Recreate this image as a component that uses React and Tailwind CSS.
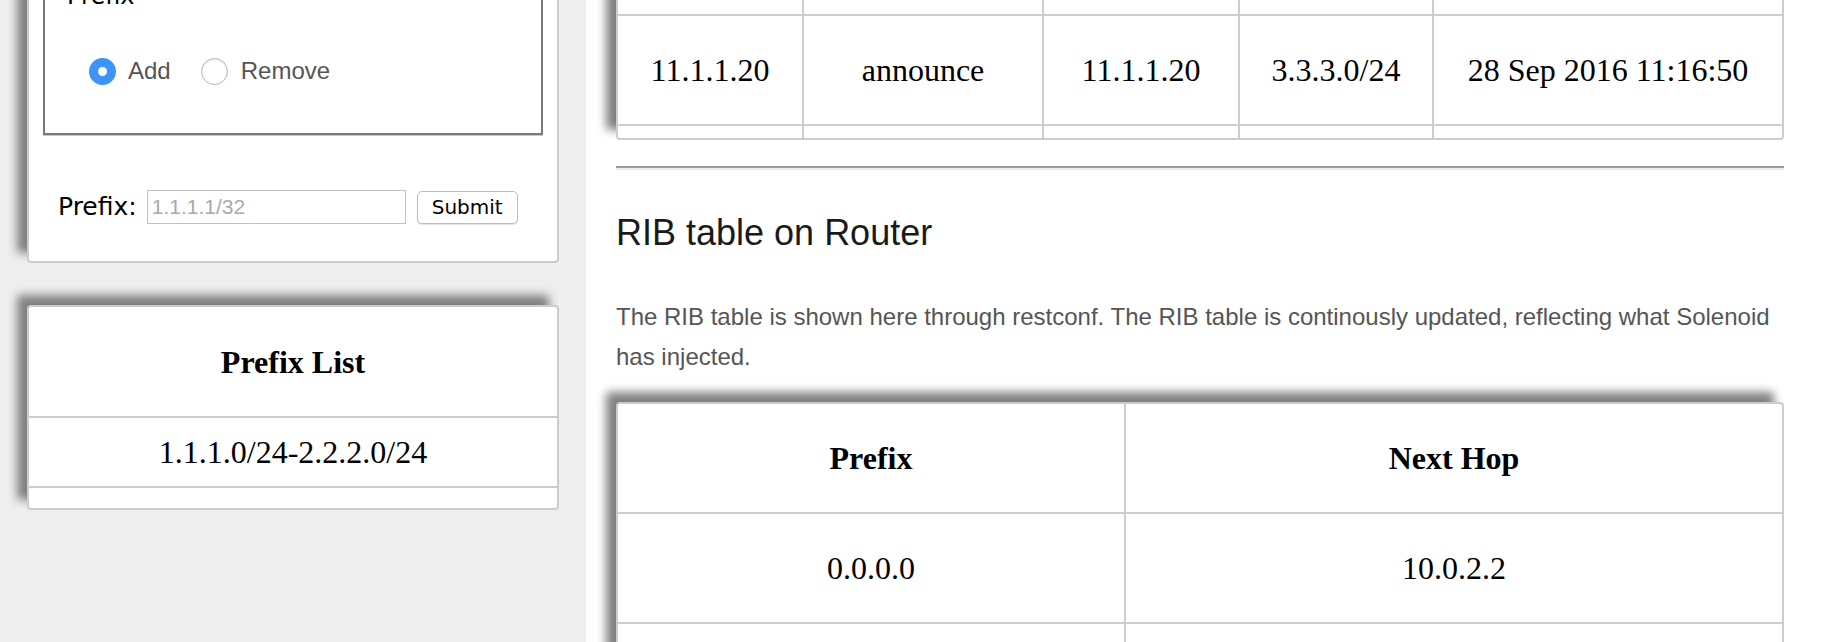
import React from "react";

const serif = { fontFamily: '"Liberation Serif", "Times New Roman", serif' };

const Radio = ({ checked }) =>
  checked ? (
    <span className="flex h-[27px] w-[27px] shrink-0 items-center justify-center rounded-full bg-[#3d94f6]">
      <span className="block h-[9px] w-[9px] rounded-full bg-white" />
    </span>
  ) : (
    <span className="block h-[27px] w-[27px] shrink-0 rounded-full border border-[#b5b5b5] bg-white shadow-[inset_0_1px_2px_rgba(0,0,0,0.12)]" />
  );

const routes = [
  { peer: "11.1.1.20", type: "announce", nextHop: "11.1.1.20", prefix: "3.3.3.0/24", time: "28 Sep 2016 11:16:50" },
];

const rib = [{ prefix: "0.0.0.0", nextHop: "10.0.2.2" }];

export default function App() {
  return (
    <div className="flex h-[642px] w-[1826px] overflow-hidden bg-white">
      {/* Sidebar */}
      <div className="w-[586px] shrink-0 bg-[#eeeeee] px-[27px]">
        {/* Announce / withdraw form */}
        <div className="-mt-[60px] rounded-[4px] border-2 border-[#cccccc] bg-white px-[14px] pt-[18px] pb-[37px] shadow-[-10px_-10px_10px_#808080]">
          <div className="border-2 border-[#7a7a7a] pb-[48px] shadow-[0_1px_0_#c8c8c8]">
            <div className="mt-[20px] pl-[22px] text-[24px] leading-[28px] text-black" style={{ fontFamily: '"DejaVu Sans", sans-serif' }}>
              Prefix
            </div>
            <div className="mt-[47px] ml-[44px] flex h-[28px] items-center text-[24px] text-[#555555]" style={{ fontFamily: '"Liberation Sans", Arial, sans-serif' }}>
              <Radio checked />
              <span className="ml-[12px]">Add</span>
              <span className="ml-[30px] flex"><Radio /></span>
              <span className="ml-[13px]">Remove</span>
            </div>
          </div>
          <div className="mt-[55px] ml-[15px] flex h-[34px] items-center" style={{ fontFamily: '"DejaVu Sans", sans-serif' }}>
            <span className="text-[25px] text-black">Prefix:</span>
            <div className="ml-[10px] flex h-[34px] w-[259px] items-center border border-[#c2c2c2] bg-white px-[4px] text-[21px] text-[#a9a9a9]" style={{ fontFamily: '"Liberation Sans", Arial, sans-serif' }}>
              1.1.1.1/32
            </div>
            <button className="ml-[11px] flex h-[33px] w-[101px] items-center justify-center rounded-[5px] border border-[#bdbdbd] bg-white text-[20px] text-black shadow-[0_1px_1px_rgba(0,0,0,0.12)]">
              Submit
            </button>
          </div>
        </div>

        {/* Prefix list */}
        <div className="mt-[42px] rounded-[4px] border-2 border-[#cccccc] bg-white text-black shadow-[-10px_-10px_10px_#808080]" style={serif}>
          <div className="flex h-[111px] items-center justify-center border-b-2 border-[#cccccc] text-[32px] font-bold">
            Prefix List
          </div>
          <div className="flex h-[70px] items-center justify-center border-b-2 border-[#cccccc] text-[32px]">
            1.1.1.0/24-2.2.2.0/24
          </div>
          <div className="h-[20px]" />
        </div>
      </div>

      {/* Main */}
      <div className="flex-1 pl-[30px] pr-[42px]">
        {/* Route updates table */}
        <div className="-mt-[86px] rounded-[4px] border-2 border-[#cccccc] bg-white text-[32px] text-black shadow-[-10px_-10px_10px_#808080]" style={serif}>
          <div className="grid h-[100px] grid-cols-[186px_240px_196px_194px_1fr] border-b-2 border-[#cccccc]">
            <div className="border-r-2 border-[#cccccc]" />
            <div className="border-r-2 border-[#cccccc]" />
            <div className="border-r-2 border-[#cccccc]" />
            <div className="border-r-2 border-[#cccccc]" />
            <div />
          </div>
          {routes.map((r, i) => (
            <div key={i} className="grid h-[110px] grid-cols-[186px_240px_196px_194px_1fr] border-b-2 border-[#cccccc]">
              <div className="flex items-center justify-center border-r-2 border-[#cccccc]">{r.peer}</div>
              <div className="flex items-center justify-center border-r-2 border-[#cccccc]">{r.type}</div>
              <div className="flex items-center justify-center border-r-2 border-[#cccccc]">{r.nextHop}</div>
              <div className="flex items-center justify-center border-r-2 border-[#cccccc]">{r.prefix}</div>
              <div className="flex items-center justify-center">{r.time}</div>
            </div>
          ))}
          <div className="grid h-[12px] grid-cols-[186px_240px_196px_194px_1fr]">
            <div className="border-r-2 border-[#cccccc]" />
            <div className="border-r-2 border-[#cccccc]" />
            <div className="border-r-2 border-[#cccccc]" />
            <div className="border-r-2 border-[#cccccc]" />
            <div />
          </div>
        </div>

        <div className="mt-[26px] h-[4px] border-t-2 border-b-2 border-t-[#9a9a9a] border-b-[#ececec]" />

        <div style={{ fontFamily: '"Liberation Sans", Arial, sans-serif' }}>
          <h3 className="mt-[43px] text-[36px] leading-[40px] text-[#1a1a1a]">RIB table on Router</h3>
          <p className="mt-[44px] text-[24px] leading-[40px] text-[#555555]">
            The RIB table is shown here through restconf. The RIB table is continously updated, reflecting what Solenoid has injected.
          </p>
        </div>

        {/* RIB table */}
        <div className="mt-[25px] rounded-[4px] border-2 border-[#cccccc] bg-white text-[32px] text-black shadow-[-10px_-10px_10px_#808080]" style={serif}>
          <div className="grid h-[110px] grid-cols-[508px_1fr] border-b-2 border-[#cccccc] font-bold">
            <div className="flex items-center justify-center border-r-2 border-[#cccccc]">Prefix</div>
            <div className="flex items-center justify-center">Next Hop</div>
          </div>
          {rib.map((r, i) => (
            <div key={i} className="grid h-[110px] grid-cols-[508px_1fr] border-b-2 border-[#cccccc]">
              <div className="flex items-center justify-center border-r-2 border-[#cccccc]">{r.prefix}</div>
              <div className="flex items-center justify-center">{r.nextHop}</div>
            </div>
          ))}
          <div className="grid h-[110px] grid-cols-[508px_1fr]">
            <div className="border-r-2 border-[#cccccc]" />
            <div />
          </div>
        </div>
      </div>
    </div>
  );
}
